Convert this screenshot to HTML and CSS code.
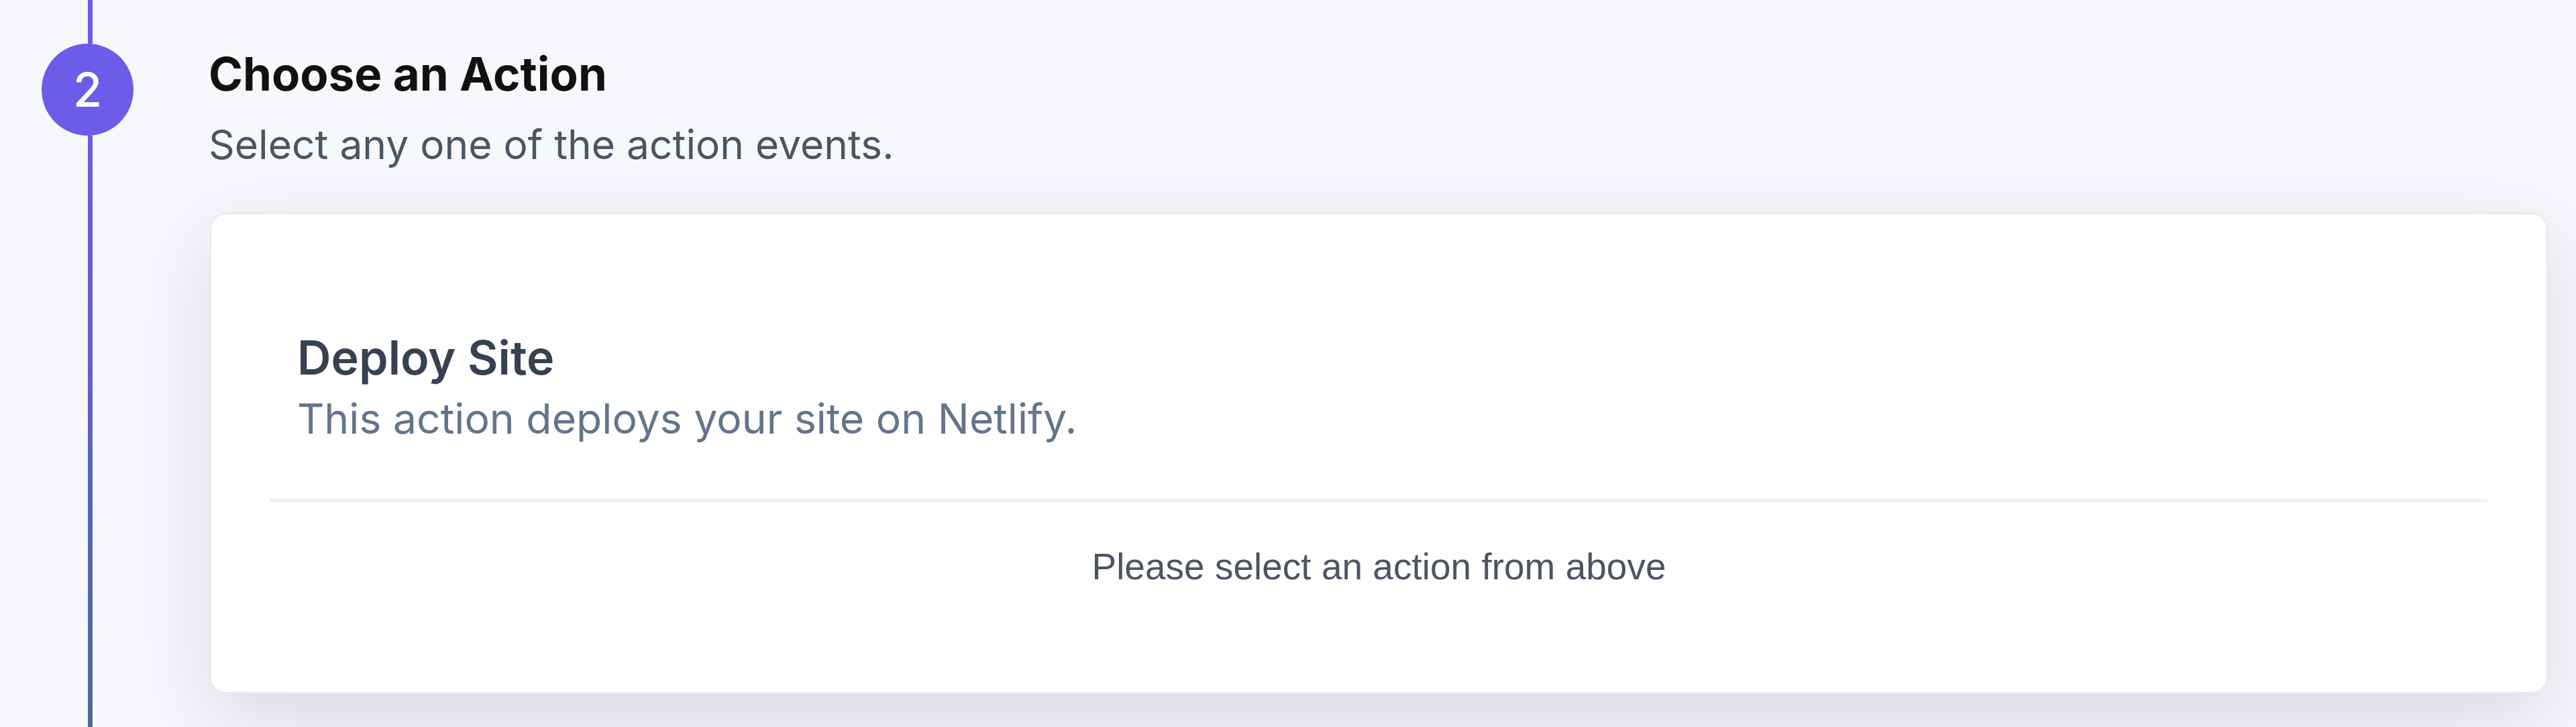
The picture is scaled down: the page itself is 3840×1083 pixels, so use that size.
FILE: index.html
```html
<!DOCTYPE html>
<html lang="en">
<head>
    <meta charset="UTF-8">
    <meta name="viewport" content="width=device-width, initial-scale=1.0">
    <title>Choose an Action</title>
    <link rel="stylesheet" href="styles.css">
</head>
<body>
    <div class="step">
        <!-- Rail with the step number -->
        <div class="rail">
            <div class="rail-line rail-line-top"></div>
            <div class="step-num">2</div>
            <div class="rail-line rail-line-bottom"></div>
        </div>

        <div class="step-body">
            <h2 class="step-title">Choose an Action</h2>
            <p class="step-subtitle">Select any one of the action events.</p>

            <div class="card">
                <div class="action">
                    <h3 class="action-name">Deploy Site</h3>
                    <p class="action-desc">This action deploys your site on Netlify.</p>
                </div>
                <div class="divider"></div>
                <div class="empty">Please select an action from above</div>
            </div>
        </div>
    </div>
</body>
</html>
```

FILE: styles.css
```css
body {
    margin: 0;
    background: #f7f8fc;
    font-family: Inter, "Noto Sans", sans-serif;
    color: #111;
    overflow: hidden;
}
.step {
    display: flex;
    min-height: 100vh;
}
.rail {
    width: 137px;
    margin-left: 62px;
    display: flex;
    flex-direction: column;
    align-items: center;
    flex-shrink: 0;
}
.rail-line {
    width: 7px;
    margin-left: 8px;
}
.rail-line-top {
    height: 65px;
    background: #6c5ce7;
}
.rail-line-bottom {
    flex: 1;
    background: linear-gradient(#6a5ce4, #5a63b8 60%, #56688f);
}
.step-num {
    width: 137px;
    height: 137px;
    border-radius: 50%;
    background: #6c5ce7;
    color: #fff;
    font-size: 70px;
    font-weight: 500;
    display: flex;
    align-items: center;
    justify-content: center;
    flex-shrink: 0;
}
.step-body {
    flex: 1;
    margin-left: 112px;
    padding: 67px 42px 0 0;
}
.step-title {
    margin: 0;
    font-size: 69px;
    line-height: 1.25;
    font-weight: 700;
    color: #111;
}
.step-subtitle {
    margin: 17px 0 0;
    font-size: 60.5px;
    line-height: 1.5;
    color: #4b5563;
}
.card {
    margin: 56px 0 0 2px;
    background: #fff;
    border: 2px solid #e8e9ed;
    border-radius: 24px;
    padding: 0 88px;
    box-shadow: 0 40px 120px rgba(15, 23, 42, 0.13);
}
.action {
    padding: 170px 40px 73px;
}
.action-name {
    margin: 0;
    font-size: 70px;
    line-height: 1.25;
    font-weight: 600;
    color: #374151;
}
.action-desc {
    margin: 0;
    font-size: 62.5px;
    line-height: 1.5;
    color: #64748b;
}
.divider {
    height: 5px;
    background: #eef1f6;
}
.empty {
    padding: 55px 0 145px;
    text-align: center;
    font-family: "Liberation Sans", Arial, sans-serif;
    font-size: 55px;
    line-height: 1.5;
    color: #4b5563;
}
```
